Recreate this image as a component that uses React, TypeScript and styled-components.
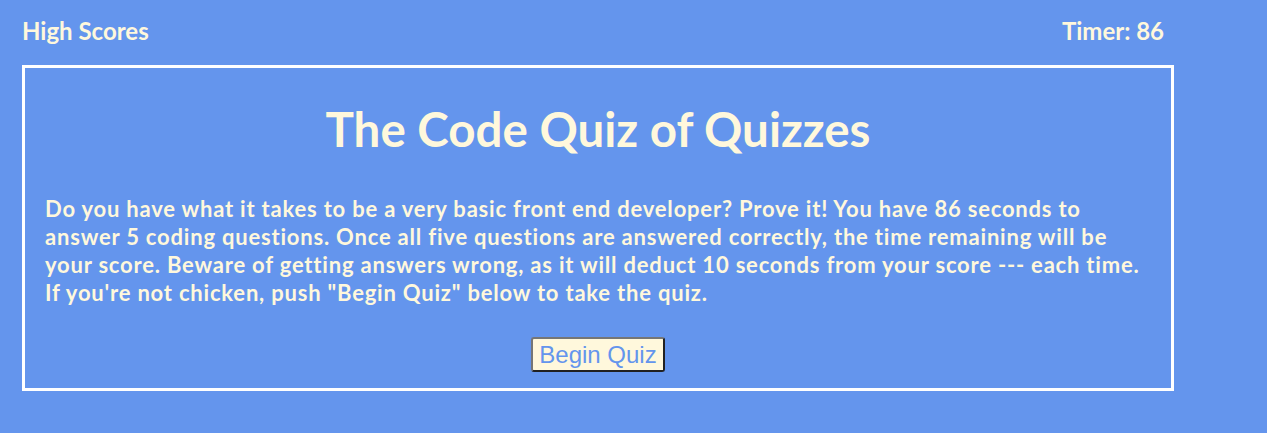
import React from "react";
import styled, { createGlobalStyle } from "styled-components";

const Global = createGlobalStyle`
  html, body { margin: 0; padding: 0; background: #6495ED; }
  body { font-family: Lato, "Liberation Sans", sans-serif; color: #FFF8DC; }
`;

const Page = styled.div`
  width: 1267px;
  height: 433px;
  padding: 0 22px;
  box-sizing: border-box;
`;

const Header = styled.header`
  display: flex;
  justify-content: space-between;
  width: 1142px;
  padding-top: 16px;
  height: 65px;
  box-sizing: border-box;
`;

const HeaderItem = styled.span`
  font-size: 24px;
  font-weight: 700;
  line-height: 30px;
`;

const Card = styled.main`
  width: 1152px;
  height: 326px;
  box-sizing: border-box;
  border: 3px solid #ffffff;
  display: flex;
  flex-direction: column;
  align-items: center;
  padding: 0 20px;
`;

const Title = styled.h1`
  margin: 32px 0 0;
  font-size: 47.5px;
  font-weight: 700;
  line-height: 58px;
  text-align: center;
`;

const Intro = styled.p`
  margin: 37px 0 0;
  font-size: 22px;
  font-weight: 700;
  line-height: 28px;
  letter-spacing: 0.8px;
  align-self: stretch;
`;

const StartButton = styled.button`
  margin-top: 30px;
  font-family: "Liberation Sans", Arial, sans-serif;
  font-size: 24px;
  color: #6495ED;
  background: #FFF8DC;
  border: 2px outset #767676;
  border-radius: 3px;
  padding: 1px 6px;
  line-height: 29px;
`;

export default function App() {
  return (
    <Page>
      <Global />
      <Header>
        <HeaderItem>High Scores</HeaderItem>
        <HeaderItem>Timer: 86</HeaderItem>
      </Header>
      <Card>
        <Title>The Code Quiz of Quizzes</Title>
        <Intro>
          Do you have what it takes to be a very basic front end developer? Prove it! You have 86 seconds to answer 5 coding
          questions. Once all five questions are answered correctly, the time remaining will be your score. Beware of getting
          answers wrong, as it will deduct 10 seconds from your score --- each time. If you're not chicken, push "Begin Quiz"
          below to take the quiz.
        </Intro>
        <StartButton>Begin Quiz</StartButton>
      </Card>
    </Page>
  );
}
